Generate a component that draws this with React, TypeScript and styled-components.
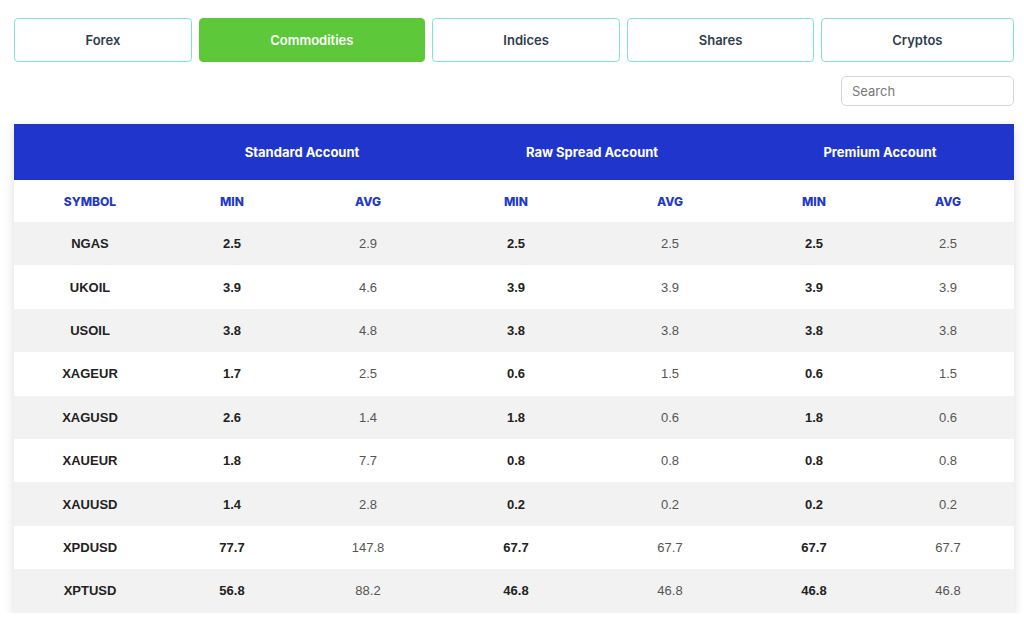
import styled, { createGlobalStyle } from 'styled-components'

const GlobalStyle = createGlobalStyle`
  html, body {
    margin: 0;
    padding: 0;
    background: #ffffff;
  }
  body {
    font-family: 'Inter', 'Open Sans', sans-serif;
  }
`

const Page = styled.div`
  width: 1024px;
  padding: 18px 10px 0 14px;
  box-sizing: border-box;
`

const Tabs = styled.div`
  display: flex;
  gap: 7px;
`

const Tab = styled.button<{ $active?: boolean }>`
  flex: 1 1 auto;
  height: 44px;
  padding: 0 10px;
  border-radius: 4px;
  border: 1px solid ${(p) => (p.$active ? '#5dc83a' : '#7fe3d2')};
  background: ${(p) => (p.$active ? '#5dc83a' : '#ffffff')};
  color: ${(p) => (p.$active ? '#ffffff' : '#2e3d4c')};
  font-family: 'Inter', sans-serif;
  font-weight: 600;
  font-size: 13px;
  cursor: pointer;
`

const SearchRow = styled.div`
  display: flex;
  justify-content: flex-end;
  margin-top: 14px;
`

const SearchInput = styled.input`
  width: 173px;
  height: 30px;
  box-sizing: border-box;
  border: 1px solid #d6d6d6;
  border-radius: 5px;
  padding: 0 10px;
  font-family: 'Inter', sans-serif;
  font-size: 13px;
  color: #333;
  outline: none;

  &::placeholder {
    color: #777;
  }
`

const TableWrap = styled.div`
  margin-top: 18px;
  width: 1000px;
  box-shadow: 0 3px 10px rgba(0, 0, 0, 0.14);
`

const Table = styled.table`
  width: 100%;
  border-collapse: collapse;
  table-layout: fixed;
`

const Col = styled.col<{ $w: number }>`
  width: ${(p) => p.$w}px;
`

const AccountRow = styled.tr`
  background: #1f35cc;
  height: 56px;
`

const AccountCell = styled.th`
  color: #ffffff;
  font-family: 'Inter', sans-serif;
  font-weight: 700;
  font-size: 13px;
  text-align: center;
  padding: 0;
`

const LabelRow = styled.tr`
  background: #ffffff;
  height: 42px;
`

const LabelCell = styled.th`
  color: #2338c8;
  font-family: 'Inter', sans-serif;
  font-weight: 800;
  font-size: 12px;
  text-align: center;
  padding: 0;
`

const DataRow = styled.tr<{ $shade: boolean }>`
  background: ${(p) => (p.$shade ? '#f2f2f2' : '#ffffff')};
  height: 43.4px;
`

const Cell = styled.td<{ $bold?: boolean }>`
  text-align: center;
  padding: 0;
  font-family: 'Liberation Sans', Arial, sans-serif;
  font-size: 13px;
  font-weight: ${(p) => (p.$bold ? 700 : 400)};
  color: ${(p) => (p.$bold ? '#222222' : '#555555')};
`

const tabs = ['Forex', 'Commodities', 'Indices', 'Shares', 'Cryptos']
const widths = [152, 132, 140, 156, 152, 136, 132]

const rows: [string, string, string, string, string, string, string][] = [
  ['NGAS', '2.5', '2.9', '2.5', '2.5', '2.5', '2.5'],
  ['UKOIL', '3.9', '4.6', '3.9', '3.9', '3.9', '3.9'],
  ['USOIL', '3.8', '4.8', '3.8', '3.8', '3.8', '3.8'],
  ['XAGEUR', '1.7', '2.5', '0.6', '1.5', '0.6', '1.5'],
  ['XAGUSD', '2.6', '1.4', '1.8', '0.6', '1.8', '0.6'],
  ['XAUEUR', '1.8', '7.7', '0.8', '0.8', '0.8', '0.8'],
  ['XAUUSD', '1.4', '2.8', '0.2', '0.2', '0.2', '0.2'],
  ['XPDUSD', '77.7', '147.8', '67.7', '67.7', '67.7', '67.7'],
  ['XPTUSD', '56.8', '88.2', '46.8', '46.8', '46.8', '46.8'],
]

export default function App() {
  return (
    <Page>
      <GlobalStyle />
      <Tabs>
        {tabs.map((t) => (
          <Tab key={t} $active={t === 'Commodities'}>
            {t}
          </Tab>
        ))}
      </Tabs>
      <SearchRow>
        <SearchInput placeholder="Search" />
      </SearchRow>
      <TableWrap>
        <Table>
          <colgroup>
            {widths.map((w, i) => (
              <Col key={i} $w={w} />
            ))}
          </colgroup>
          <thead>
            <AccountRow>
              <AccountCell />
              <AccountCell colSpan={2}>Standard Account</AccountCell>
              <AccountCell colSpan={2}>Raw Spread Account</AccountCell>
              <AccountCell colSpan={2}>Premium Account</AccountCell>
            </AccountRow>
            <LabelRow>
              <LabelCell>SYMBOL</LabelCell>
              <LabelCell>MIN</LabelCell>
              <LabelCell>AVG</LabelCell>
              <LabelCell>MIN</LabelCell>
              <LabelCell>AVG</LabelCell>
              <LabelCell>MIN</LabelCell>
              <LabelCell>AVG</LabelCell>
            </LabelRow>
          </thead>
          <tbody>
            {rows.map((r, i) => (
              <DataRow key={r[0]} $shade={i % 2 === 0}>
                {r.map((v, j) => (
                  <Cell key={j} $bold={j === 0 || j % 2 === 1}>
                    {v}
                  </Cell>
                ))}
              </DataRow>
            ))}
          </tbody>
        </Table>
      </TableWrap>
    </Page>
  )
}
